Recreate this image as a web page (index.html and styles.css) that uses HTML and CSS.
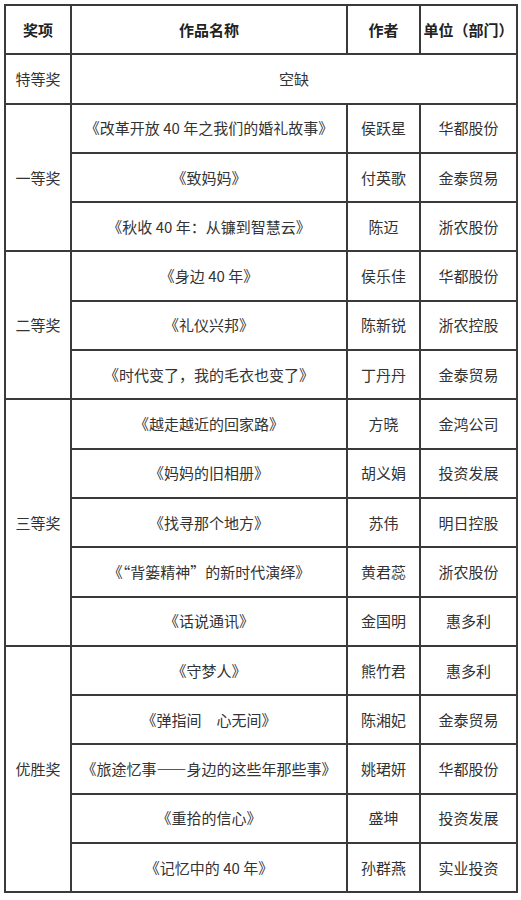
FILE: index.html
```html
<!DOCTYPE html>
<html lang="zh-CN">
<head>
<meta charset="utf-8">
<title>获奖名单</title>
<link rel="stylesheet" href="styles.css">
</head>
<body>
<table class="awards">
  <colgroup>
    <col class="c-award">
    <col class="c-title">
    <col class="c-author">
    <col class="c-unit">
  </colgroup>
  <thead>
    <tr>
      <th>奖项</th>
      <th>作品名称</th>
      <th>作者</th>
      <th>单位（部门）</th>
    </tr>
  </thead>
  <tbody>
    <tr>
      <td>特等奖</td>
      <td colspan="3">空缺</td>
    </tr>
    <tr>
      <td rowspan="3">一等奖</td>
      <td>《改革开放 40 年之我们的婚礼故事》</td>
      <td>侯跃星</td>
      <td>华都股份</td>
    </tr>
    <tr>
      <td>《致妈妈》</td>
      <td>付英歌</td>
      <td>金泰贸易</td>
    </tr>
    <tr>
      <td>《秋收 40 年：从镰到智慧云》</td>
      <td>陈迈</td>
      <td>浙农股份</td>
    </tr>
    <tr>
      <td rowspan="3">二等奖</td>
      <td>《身边 40 年》</td>
      <td>侯乐佳</td>
      <td>华都股份</td>
    </tr>
    <tr>
      <td>《礼仪兴邦》</td>
      <td>陈新锐</td>
      <td>浙农控股</td>
    </tr>
    <tr>
      <td>《时代变了，我的毛衣也变了》</td>
      <td>丁丹丹</td>
      <td>金泰贸易</td>
    </tr>
    <tr>
      <td rowspan="5">三等奖</td>
      <td>《越走越近的回家路》</td>
      <td>方晓</td>
      <td>金鸿公司</td>
    </tr>
    <tr>
      <td>《妈妈的旧相册》</td>
      <td>胡义娟</td>
      <td>投资发展</td>
    </tr>
    <tr>
      <td>《找寻那个地方》</td>
      <td>苏伟</td>
      <td>明日控股</td>
    </tr>
    <tr>
      <td>《“背篓精神”的新时代演绎》</td>
      <td>黄君蕊</td>
      <td>浙农股份</td>
    </tr>
    <tr>
      <td>《话说通讯》</td>
      <td>金国明</td>
      <td>惠多利</td>
    </tr>
    <tr>
      <td rowspan="5">优胜奖</td>
      <td>《守梦人》</td>
      <td>熊竹君</td>
      <td>惠多利</td>
    </tr>
    <tr>
      <td>《弹指间　心无间》</td>
      <td>陈湘妃</td>
      <td>金泰贸易</td>
    </tr>
    <tr>
      <td>《旅途忆事——身边的这些年那些事》</td>
      <td>姚珺妍</td>
      <td>华都股份</td>
    </tr>
    <tr>
      <td>《重拾的信心》</td>
      <td>盛坤</td>
      <td>投资发展</td>
    </tr>
    <tr>
      <td>《记忆中的 40 年》</td>
      <td>孙群燕</td>
      <td>实业投资</td>
    </tr>
  </tbody>
</table>
</body>
</html>
```

FILE: styles.css
```css
html, body {
  margin: 0;
  padding: 0;
  background: #ffffff;
}

body {
  padding: 4px 0 0 4px;
  font-family: "Noto Sans CJK SC", "Liberation Sans", sans-serif;
  color: #333333;
}

.awards {
  border-collapse: collapse;
  table-layout: fixed;
  width: 512px;
  font-size: 15px;
}

.c-award { width: 66px; }
.c-title { width: 276px; }
.c-author { width: 73px; }
.c-unit { width: 97px; }

.awards th,
.awards td {
  border: 2px solid #3a3a3a;
  text-align: center;
  vertical-align: middle;
  padding: 0;
  line-height: 20px;
  white-space: nowrap;
}

.awards tr {
  height: 49.3px;
}

.awards th {
  font-weight: bold;
  color: #222222;
}
```
